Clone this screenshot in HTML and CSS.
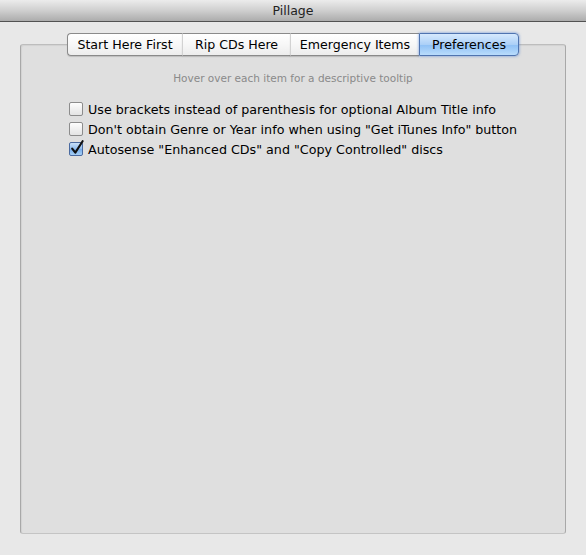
FILE: index.html
```html
<!DOCTYPE html>
<html>
<head>
<meta charset="utf-8">
<link rel="stylesheet" href="styles.css">
</head>
<body>
<div class="window">
  <div class="titlebar">Pillage</div>
  <div class="content">
    <div class="tabs">
      <div class="tab t1">Start Here First</div>
      <div class="tab t2">Rip CDs Here</div>
      <div class="tab t3">Emergency Items</div>
      <div class="tab t4 active">Preferences</div>
    </div>
    <div class="panel">
      <div class="hint">Hover over each item for a descriptive tooltip</div>
      <div class="options">
        <label class="option"><span class="box"></span><span class="label">Use brackets instead of parenthesis for optional Album Title info</span></label>
        <label class="option"><span class="box"></span><span class="label">Don't obtain Genre or Year info when using "Get iTunes Info" button</span></label>
        <label class="option"><span class="box checked"><svg class="tick" width="16" height="16" viewBox="0 0 16 16"><path d="M3.2 8.6 L6.3 12.6 L13.6 1.2" fill="none" stroke="#111" stroke-width="2.1" stroke-linecap="round" stroke-linejoin="round"/></svg></span><span class="label">Autosense "Enhanced CDs" and "Copy Controlled" discs</span></label>
      </div>
    </div>
  </div>
</div>
</body>
</html>
```
FILE: styles.css
```css
html, body {
  margin: 0;
  padding: 0;
  background: #e8e8e8;
}
.window {
  width: 586px;
  height: 555px;
  display: flex;
  flex-direction: column;
  font-family: "DejaVu Sans", "Liberation Sans", sans-serif;
  color: #000;
}
.titlebar {
  height: 21px;
  border-bottom: 1px solid #525252;
  background: linear-gradient(#ececec, #cfcfcf 50%, #acacac);
  text-align: center;
  font-size: 12.5px;
  line-height: 22px;
  color: #222;
}
.content {
  display: flex;
  flex-direction: column;
  padding: 11px 20px 0 20px;
}
.tabs {
  display: flex;
  justify-content: center;
  position: relative;
  z-index: 2;
  height: 23px;
  margin-left: 0;
}
.tab {
  box-sizing: border-box;
  height: 23px;
  border: 1px solid #8a8a8a;
  border-left: 1px solid #d2d2d2;
  border-right: none;
  background: linear-gradient(#ffffff, #f7f7f7 50%, #ededed);
  font-size: 12.6px;
  line-height: 21px;
  text-align: center;
  box-shadow: 0 1px 1px rgba(0,0,0,0.15);
}
.t1 { width: 115px; }
.t2 { width: 108px; }
.t3 { width: 129px; }
.t4 { width: 100px; }
.tab:first-child {
  border-left: 1px solid #8a8a8a;
  border-radius: 4px 0 0 4px;
}
.tab.active {
  border: 1px solid #4f74b0;
  border-radius: 0 4px 4px 0;
  background: linear-gradient(#d6e9fd, #acd0f7 50%, #8ec0f5 51%, #b9dcfc);
  box-shadow: 0 0 3px rgba(50,110,210,0.7);
}
.panel {
  margin-top: -12px;
  height: 488px;
  border: 1px solid #a8a8a8;
  border-top-color: #bdbdbd;
  border-bottom-color: #c4c4c4;
  border-radius: 3px;
  background: #dfdfdf;
  box-shadow: inset 1px 1px 1px rgba(0,0,0,0.06);
  display: flex;
  flex-direction: column;
}
.hint {
  margin-top: 27px;
  text-align: center;
  font-size: 10.5px;
  color: #8a8a8a;
}
.options {
  margin-top: 18px;
  margin-left: 48px;
  display: flex;
  flex-direction: column;
  gap: 6px;
}
.option {
  display: flex;
  align-items: center;
  height: 14px;
  font-size: 12.7px;
}
.box {
  width: 12px;
  height: 12px;
  border: 1px solid #8c8c8c;
  border-radius: 2px;
  background: linear-gradient(#fdfdfd, #f0f0f0 50%, #e4e4e4);
  margin-right: 5px;
  position: relative;
  flex: none;
}
.box.checked {
  border-color: #4a6aa0;
  background: linear-gradient(#c9e0f8, #8fbcee 50%, #74abea 51%, #a7d0f6);
}
.tick {
  position: absolute;
  left: -1px;
  top: -3px;
}
.label {
  white-space: nowrap;
}
```
